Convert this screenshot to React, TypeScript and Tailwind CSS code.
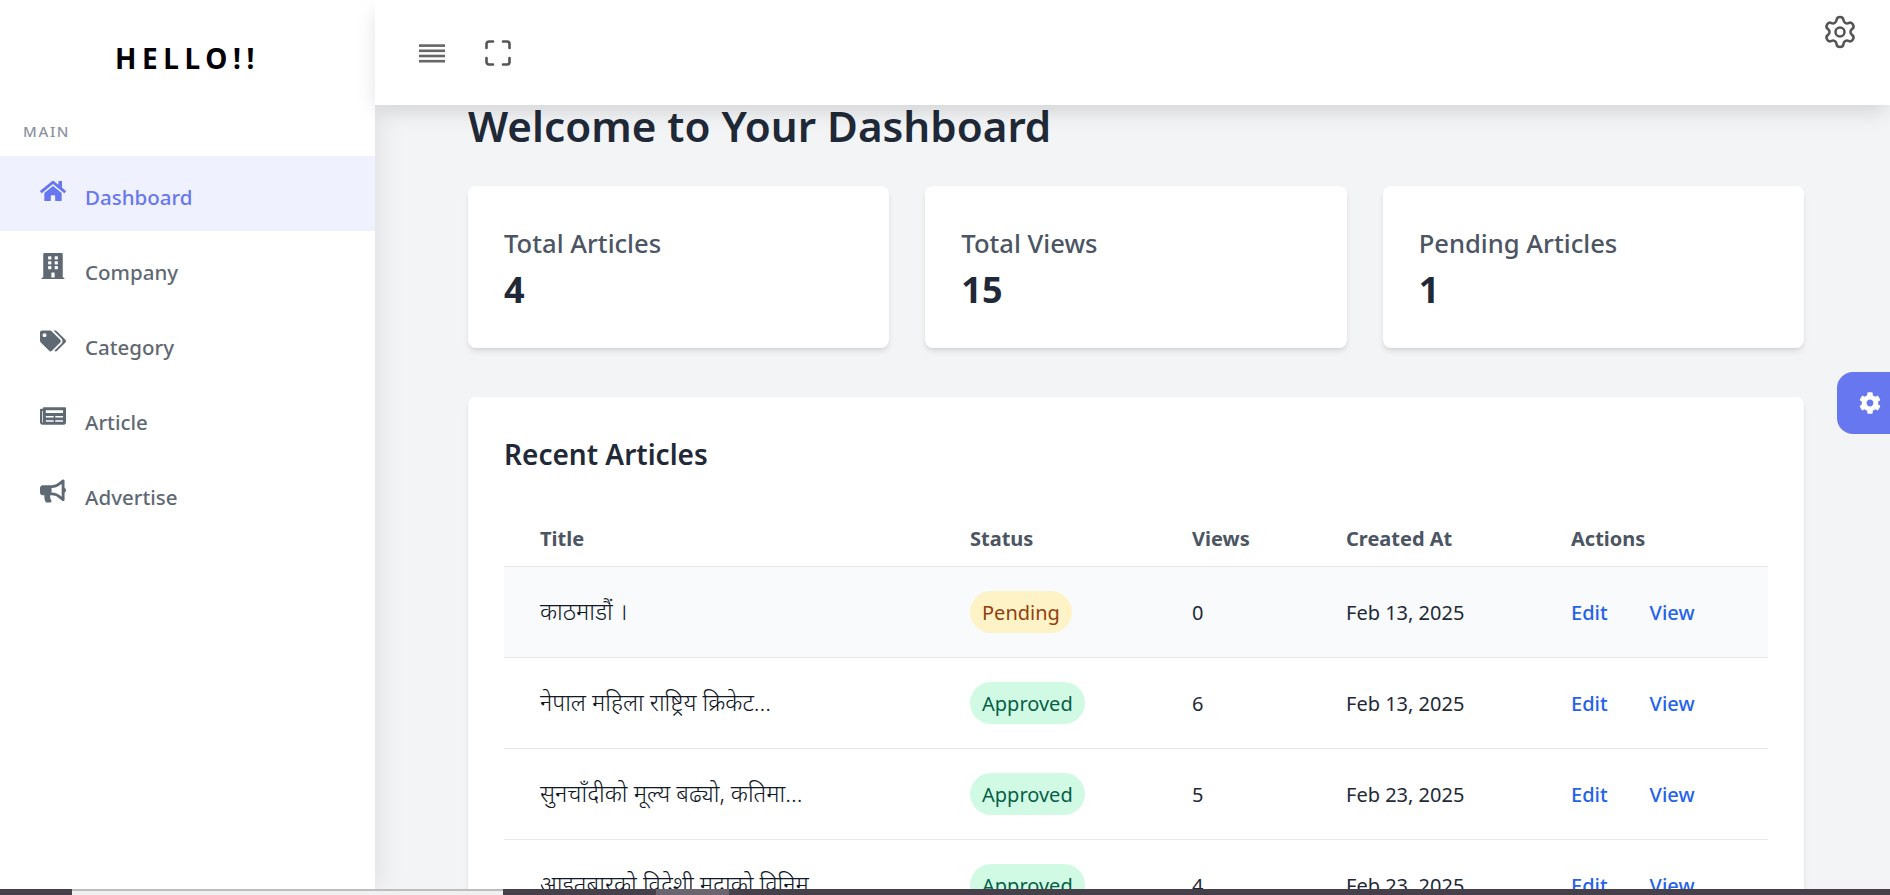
import React from "react";
import { FaHome, FaBuilding, FaTags, FaNewspaper, FaBullhorn, FaCog } from "react-icons/fa";
import { Settings } from "lucide-react";

const nav = [
  { label: "Dashboard", Icon: FaHome, active: true },
  { label: "Company", Icon: FaBuilding },
  { label: "Category", Icon: FaTags },
  { label: "Article", Icon: FaNewspaper },
  { label: "Advertise", Icon: FaBullhorn },
];

const rows = [
  { title: "काठमाडौं ।", status: "Pending", views: "0", date: "Feb 13, 2025", hover: true },
  { title: "नेपाल महिला राष्ट्रिय क्रिकेट...", status: "Approved", views: "6", date: "Feb 13, 2025" },
  { title: "सुनचाँदीको मूल्य बढ्यो, कतिमा...", status: "Approved", views: "5", date: "Feb 23, 2025" },
  { title: "आइतबारको विदेशी मुद्राको विनिम...", status: "Approved", views: "4", date: "Feb 23, 2025" },
];

const cards = [
  { label: "Total Articles", value: "4" },
  { label: "Total Views", value: "15" },
  { label: "Pending Articles", value: "1" },
];

export default function App() {
  return (
    <div className="relative flex h-[895px] w-[1890px] overflow-hidden bg-[#f3f4f6] font-['Noto_Sans',sans-serif] text-[#1f2937]">
      <aside className="z-20 flex w-[375px] shrink-0 flex-col bg-white shadow-[0_0_28px_rgba(0,0,0,0.1)]">
        <div className="flex h-[117px] items-center justify-center pb-[2px]">
          <span className="text-[28px] font-bold tracking-[0.2em] text-black">HELLO!!</span>
        </div>
        <div className="pl-[23px] text-[15px] font-medium leading-[28px] tracking-[0.11em] text-[#8a939e]">MAIN</div>
        <nav className="mt-[11px]">
          {nav.map(({ label, Icon, active }) => (
            <div
              key={label}
              className={`flex h-[75px] items-center pl-[40px] ${active ? "bg-[#eff1fe] text-[#6777ef]" : "text-[#5f6974]"}`}
            >
              <Icon className="mb-[6px] w-[26px] text-[26px]" />
              <span className="ml-[19px] mt-[7px] text-[20.5px] font-medium">{label}</span>
            </div>
          ))}
        </nav>
      </aside>

      <div className="flex min-w-0 flex-1 flex-col">
        <header className="z-30 flex h-[105px] shrink-0 items-start bg-white shadow-[0_8px_22px_-4px_rgba(0,0,0,0.16)]">
          <svg width="26" height="19" viewBox="0 0 26 19" className="ml-[44px] mt-[44px]" fill="#666">
            <rect y="0.3" width="26" height="2.6" />
            <rect y="5.5" width="26" height="2.6" />
            <rect y="10.7" width="26" height="2.6" />
            <rect y="15.9" width="26" height="2.6" />
          </svg>
          <svg width="26" height="26" viewBox="0 0 26 26" className="ml-[40px] mt-[40px]" fill="none" stroke="#555" strokeWidth="2.6" strokeLinecap="round" strokeLinejoin="round">
            <path d="M1.5 8V4a2.5 2.5 0 0 1 2.5-2.5h4M18 1.5h4A2.5 2.5 0 0 1 24.5 4v4M24.5 18v4a2.5 2.5 0 0 1-2.5 2.5h-4M8 24.5H4A2.5 2.5 0 0 1 1.5 22v-4" />
          </svg>
          <Settings className="ml-auto mr-[32px] mt-[14px] h-[36px] w-[36px] text-[#555]" strokeWidth={1.7} />
        </header>

        <main className="min-h-0 flex-1 overflow-hidden pl-[93px] pr-[86px]">
          <h1 className="mt-[-9px] text-[42.2px] font-semibold leading-[60px] text-[#1f2937]">Welcome to Your Dashboard</h1>
          <div className="mt-[30px] grid grid-cols-3 gap-[36px]">
            {cards.map((c) => (
              <div key={c.label} className="h-[162px] rounded-lg bg-white px-[36px] pt-[40px] shadow-md">
                <div className="text-[25.6px] font-medium leading-[36px] text-[#4b5563]">{c.label}</div>
                <div className="text-[36px] font-bold leading-[56px] text-[#1f2937]">{c.value}</div>
              </div>
            ))}
          </div>
          <section className="mt-[49px] rounded-lg bg-white px-[36px] pt-[36px] shadow-md">
            <h2 className="text-[28px] font-semibold leading-[42px] text-[#1f2937]">Recent Articles</h2>
            <table className="mt-[35px] w-full table-fixed border-collapse text-left text-[20px]">
              <thead>
                <tr className="h-[56px] border-b border-[#e5e7eb] text-[#4b5563]">
                  <th className="w-[466px] pl-[36px] pt-[2px] font-bold">Title</th>
                  <th className="w-[222px] pt-[2px] font-bold">Status</th>
                  <th className="w-[154px] pt-[2px] font-bold">Views</th>
                  <th className="w-[225px] pt-[2px] font-bold">Created At</th>
                  <th className="pt-[2px] font-bold">Actions</th>
                </tr>
              </thead>
              <tbody>
                {rows.map((r) => (
                  <tr key={r.title} className={`h-[91px] border-b border-[#e5e7eb] ${r.hover ? "bg-[#f9fafb]" : ""}`}>
                    <td className="pl-[36px] text-[23.5px] font-light text-[#111827]">{r.title}</td>
                    <td>
                      <span
                        className={`inline-flex h-[42px] items-center rounded-full px-[12px] pt-[2px] ${
                          r.status === "Pending" ? "bg-[#fef3c7] text-[#92400e]" : "bg-[#d1fae5] text-[#065f46]"
                        }`}
                      >
                        {r.status}
                      </span>
                    </td>
                    <td className="pt-[2px]">{r.views}</td>
                    <td className="pt-[2px]">{r.date}</td>
                    <td className="pt-[2px] font-medium text-[#2563eb]">
                      <span>Edit</span>
                      <span className="ml-[42px]">View</span>
                    </td>
                  </tr>
                ))}
              </tbody>
            </table>
          </section>
        </main>
      </div>

      <div className="absolute right-0 top-[372px] z-20 flex h-[62px] w-[53px] items-center rounded-l-2xl bg-[#6777ef] pl-[22px] text-white">
        <FaCog className="text-[22px]" />
      </div>

      <div className="absolute bottom-0 left-0 z-30 h-[6px] w-full bg-[#454049]">
        <div className="absolute left-[72px] top-0 h-[6px] w-[431px] border-t-2 border-[#bdbdbd] bg-[#f0f0f0]" />
        <div className="absolute left-[656px] top-0 h-[6px] w-[73px] bg-[#6b656f]" />
      </div>
    </div>
  );
}
